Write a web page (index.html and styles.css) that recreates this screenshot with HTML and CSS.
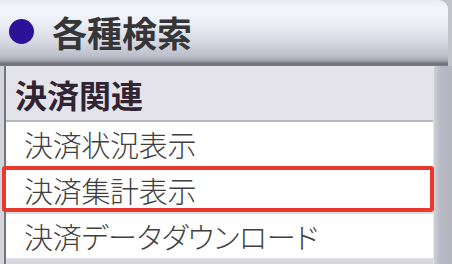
FILE: index.html
```
<!DOCTYPE html>
<html lang="ja">
<head>
<meta charset="utf-8">
<link rel="stylesheet" href="styles.css">
</head>
<body>
<div class="screen">
  <div class="header">
    <span class="dot"></span>
    <span class="title">各種検索</span>
  </div>
  <div class="body">
    <div class="left-strip"></div>
    <div class="panel">
      <div class="group-head">決済関連</div>
      <div class="row">決済状況表示</div>
      <div class="row selected">決済集計表示<span class="highlight"></span></div>
      <div class="row">決済データダウンロード</div>
    </div>
    <div class="right-strip"></div>
  </div>
</div>
</body>
</html>
```
FILE: styles.css
```
html, body {
  margin: 0;
  padding: 0;
}
body {
  width: 452px;
  height: 264px;
  overflow: hidden;
  background: #c2c3cb;
  font-family: "Noto Sans CJK JP", "Noto Sans", sans-serif;
}
.screen {
  width: 452px;
  height: 264px;
  display: flex;
  flex-direction: column;
}
.header {
  box-sizing: border-box;
  width: 448px;
  height: 66px;
  flex: none;
  display: flex;
  align-items: center;
  padding-left: 9px;
  padding-bottom: 4px;
  border-top-right-radius: 9px;
  background: linear-gradient(to bottom, #e9ebf1 0px, #f4f6fc 8px, #eef0f7 22px, #d6d8e2 42px, #bcbec9 56px, #a9abb5 60px, #6e6f77 64px, #7c7d85 66px);
}
.dot {
  width: 25px;
  height: 25px;
  border-radius: 50%;
  background: #2b1299;
  margin-right: 18px;
  flex: none;
}
.title {
  font-size: 35px;
  line-height: 1;
  font-weight: 700;
  color: #363638;
}
.body {
  flex: 1;
  display: flex;
}
.left-strip {
  width: 4px;
  background: #d4d5db;
  border-right: 2px solid #74757d;
}
.panel {
  width: 427px;
  background: #d6d6dc;
}
.right-strip {
  flex: 1;
  border-left: 1px solid #e4e4ea;
  background: linear-gradient(to right, #d0d1d8 0px, #bbbcc5 5px, #b3b4be 100%);
}
.group-head {
  box-sizing: border-box;
  height: 56px;
  padding-left: 9px;
  padding-top: 1px;
  display: flex;
  align-items: center;
  font-size: 32px;
  line-height: 1;
  font-weight: 700;
  color: #302432;
  background: #e3e3e9;
  border-bottom: 2px solid #b6b6be;
}
.row {
  position: relative;
  box-sizing: border-box;
  height: 46px;
  padding-left: 18px;
  display: flex;
  align-items: center;
  font-size: 29px;
  line-height: 1;
  font-weight: 300;
  font-feature-settings: "palt";
  letter-spacing: -0.3px;
  color: #404042;
  background: #ffffff;
  border-bottom: 2px solid #dcdce2;
}
.highlight {
  position: absolute;
  box-sizing: border-box;
  top: -2px;
  left: -4px;
  right: -1px;
  height: 46px;
  border: 4px solid #e9382c;
  border-radius: 3px;
}
```
